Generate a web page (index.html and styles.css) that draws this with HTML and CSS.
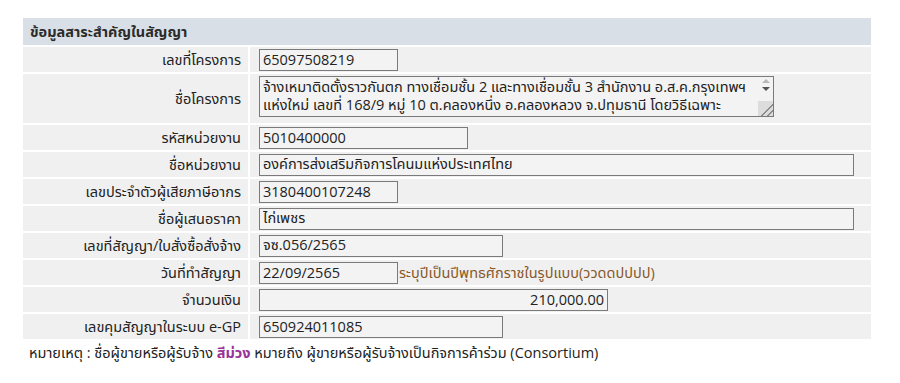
FILE: index.html
```html
<!DOCTYPE html>
<html lang="th">
<head>
  <meta charset="UTF-8">
  <title>ข้อมูลสาระสำคัญในสัญญา</title>
  <link rel="stylesheet" href="styles.css">
</head>
<body>
  <div class="panel">
    <div class="panel-head">ข้อมูลสาระสำคัญในสัญญา</div>

    <div class="row">
      <div class="label">เลขที่โครงการ</div>
      <div class="value"><input type="text" class="w-sm" value="65097508219" readonly></div>
    </div>

    <div class="row">
      <div class="label">ชื่อโครงการ</div>
      <div class="value value-area">
        <div class="area-wrap">
          <textarea class="w-area" rows="2" readonly>จ้างเหมาติดตั้งราวกันตก ทางเชื่อมชั้น 2 และทางเชื่อมชั้น 3 สำนักงาน อ.ส.ค.กรุงเทพฯ
แห่งใหม่ เลขที่ 168/9 หมู่ 10 ต.คลองหนึ่ง อ.คลองหลวง จ.ปทุมธานี โดยวิธีเฉพาะ
เจาะจง</textarea>
          <div class="spin"><span class="up"></span><span class="down"></span></div>
        </div>
      </div>
    </div>

    <div class="row">
      <div class="label">รหัสหน่วยงาน</div>
      <div class="value"><input type="text" class="w-md" value="5010400000" readonly></div>
    </div>

    <div class="row">
      <div class="label">ชื่อหน่วยงาน</div>
      <div class="value"><input type="text" class="w-lg" value="องค์การส่งเสริมกิจการโคนมแห่งประเทศไทย" readonly></div>
    </div>

    <div class="row">
      <div class="label">เลขประจำตัวผู้เสียภาษีอากร</div>
      <div class="value"><input type="text" class="w-sm" value="3180400107248" readonly></div>
    </div>

    <div class="row">
      <div class="label">ชื่อผู้เสนอราคา</div>
      <div class="value"><input type="text" class="w-lg" value="ไก่เพชร" readonly></div>
    </div>

    <div class="row">
      <div class="label">เลขที่สัญญา/ใบสั่งซื้อสั่งจ้าง</div>
      <div class="value"><input type="text" class="w-mid" value="จซ.056/2565" readonly></div>
    </div>

    <div class="row">
      <div class="label">วันที่ทำสัญญา</div>
      <div class="value">
        <input type="text" class="w-sm" value="22/09/2565" readonly><span class="hint">ระบุปีเป็นปีพุทธศักราชในรูปแบบ(ววดดปปปป)</span>
      </div>
    </div>

    <div class="row">
      <div class="label">จำนวนเงิน</div>
      <div class="value"><input type="text" class="w-amt" value="210,000.00" readonly></div>
    </div>

    <div class="row">
      <div class="label">เลขคุมสัญญาในระบบ e-GP</div>
      <div class="value"><input type="text" class="w-mid" value="650924011085" readonly></div>
    </div>
  </div>

  <p class="note">หมายเหตุ : ชื่อผู้ขายหรือผู้รับจ้าง <b class="purple">สีม่วง</b> หมายถึง ผู้ขายหรือผู้รับจ้างเป็นกิจการค้าร่วม (Consortium)</p>
</body>
</html>
```

FILE: styles.css
```css
body {
  margin: 0;
  background: #ffffff;
  font-family: "Open Sans", Tahoma, "Noto Sans Thai", sans-serif;
  font-size: 14.5px;
  line-height: 18px;
  color: #222;
}

.panel {
  width: 848px;
  margin: 18px 0 0 23px;
  display: grid;
  grid-template-columns: 225px 1fr;
  gap: 2px;
}

.panel-head {
  grid-column: 1 / 3;
  height: 27px;
  line-height: 27px;
  padding-left: 7px;
  background-color: #d9dfe6;
  font-weight: bold;
  color: #2b2b2b;
}

.row {
  display: contents;
}

.label,
.value {
  background-color: #f0f0f0;
  display: flex;
  align-items: center;
  min-height: 25px;
}

.label {
  justify-content: flex-end;
  padding-right: 7px;
}

.value {
  padding-left: 9px;
}

.value-area {
  min-height: 49px;
  align-items: flex-start;
}

input[type="text"],
textarea {
  font-family: inherit;
  font-size: 14.5px;
  color: #222;
  background-color: #f3f3f3;
  border: 1px solid #7a7a7a;
  margin: 0;
  padding: 0 3px;
  box-sizing: border-box;
  height: 22px;
}

.area-wrap {
  position: relative;
  margin-top: 2px;
  height: 41px;
}

textarea {
  display: block;
  height: 41px;
  line-height: 18px;
  padding: 1px 3px;
  resize: both;
  overflow-y: scroll;
  white-space: pre;
}

textarea::-webkit-scrollbar {
  width: 15px;
  background-color: #f0f0f0;
}

textarea::-webkit-scrollbar-thumb {
  background-color: #f0f0f0;
}

textarea::-webkit-scrollbar-corner,
textarea::-webkit-resizer {
  background-color: #dcdcdc;
  background-image: linear-gradient(135deg, transparent 58%, #8a8a8a 58%, #8a8a8a 64%, transparent 64%, transparent 78%, #8a8a8a 78%, #8a8a8a 84%, transparent 84%);
}

/* scrollbar arrows drawn over the textarea */
.spin {
  position: absolute;
  top: 3px;
  right: 1px;
  width: 15px;
  display: flex;
  flex-direction: column;
  align-items: center;
  gap: 4px;
}

.spin span {
  width: 0;
  height: 0;
  border-left: 4px solid transparent;
  border-right: 4px solid transparent;
}

.spin .up {
  border-bottom: 4px solid #b8b8b8;
}

.spin .down {
  border-top: 4px solid #555;
}

.w-sm { width: 139px; }
.w-md { width: 209px; }
.w-mid { width: 244px; }
.w-amt { width: 349px; text-align: right; }
.w-lg { width: 595px; }
.w-area { width: 515px; }

.hint {
  color: #87592a;
  padding-left: 1px;
}

.note {
  margin: 5px 0 0 29px;
}

.purple {
  color: #993399;
}
```
